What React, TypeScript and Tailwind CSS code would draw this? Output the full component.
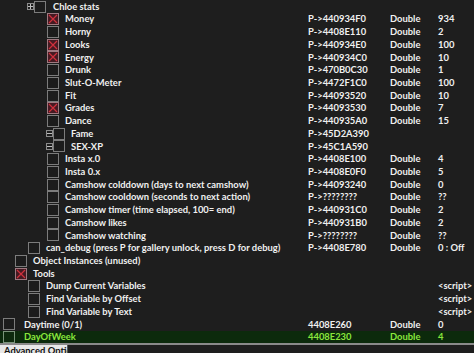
import React from "react";

type Row = {
  name: string;
  cb: number; // checkbox left x
  text: number; // text left x
  expand?: "+" | "-";
  ex?: number;
  checked?: boolean;
  addr?: string;
  type?: string;
  value?: string;
  green?: boolean;
};

const rows: Row[] = [
  { name: "Chloe stats", cb: 34, text: 53, expand: "+", ex: 27 },
  { name: "Money", cb: 47, text: 65, checked: true, addr: "P->440934F0", type: "Double", value: "934" },
  { name: "Horny", cb: 47, text: 65, addr: "P->4408E110", type: "Double", value: "2" },
  { name: "Looks", cb: 47, text: 65, checked: true, addr: "P->440934E0", type: "Double", value: "100" },
  { name: "Energy", cb: 47, text: 65, checked: true, addr: "P->440934C0", type: "Double", value: "10" },
  { name: "Drunk", cb: 47, text: 65, addr: "P->470B0C30", type: "Double", value: "1" },
  { name: "Slut-O-Meter", cb: 47, text: 65, addr: "P->4472F1C0", type: "Double", value: "100" },
  { name: "Fit", cb: 47, text: 65, addr: "P->44093520", type: "Double", value: "10" },
  { name: "Grades", cb: 47, text: 65, checked: true, addr: "P->44093530", type: "Double", value: "7" },
  { name: "Dance", cb: 47, text: 65, addr: "P->440935A0", type: "Double", value: "15" },
  { name: "Fame", cb: 53, text: 71, expand: "-", ex: 46, addr: "P->45D2A390" },
  { name: "SEX-XP", cb: 53, text: 71, expand: "-", ex: 46, addr: "P->45C1A590" },
  { name: "Insta x.0", cb: 47, text: 65, addr: "P->4408E100", type: "Double", value: "4" },
  { name: "Insta 0.x", cb: 47, text: 65, addr: "P->4408E0F0", type: "Double", value: "5" },
  { name: "Camshow colddown (days to next camshow)", cb: 47, text: 65, addr: "P->44093240", type: "Double", value: "0" },
  { name: "Camshow cooldown (seconds to next action)", cb: 47, text: 65, addr: "P->????????", type: "Double", value: "??" },
  { name: "Camshow timer (time elapsed, 100= end)", cb: 47, text: 65, addr: "P->440931C0", type: "Double", value: "2" },
  { name: "Camshow likes", cb: 47, text: 65, addr: "P->440931B0", type: "Double", value: "2" },
  { name: "Camshow watching", cb: 47, text: 65, addr: "P->????????", type: "Double", value: "??" },
  { name: "can_debug (press P for gallery unlock, press D for debug)", cb: 28, text: 46, addr: "P->4408E780", type: "Double", value: "0 : Off" },
  { name: "Object Instances (unused)", cb: 15, text: 33 },
  { name: "Tools", cb: 15, text: 33, checked: true },
  { name: "Dump Current Variables", cb: 28, text: 46, value: "<script>" },
  { name: "Find Variable by Offset", cb: 28, text: 46, value: "<script>" },
  { name: "Find Variable by Text", cb: 28, text: 46, value: "<script>" },
  { name: "Daytime (0/1)", cb: 3, text: 24, addr: "4408E260", type: "Double", value: "0" },
  { name: "DayOfWeek", cb: 3, text: 24, addr: "4408E230", type: "Double", value: "4", green: true },
];

function Checkbox({ checked, green }: { checked?: boolean; green?: boolean }) {
  if (checked) {
    return (
      <div className="w-[12px] h-[12px] border border-[#a07880] bg-[#451a22] flex items-center justify-center shrink-0">
        <svg width="10" height="10" viewBox="0 0 10 10">
          <path d="M1 1 L9 9 M9 1 L1 9" stroke="#d0303c" strokeWidth="1.2" />
        </svg>
      </div>
    );
  }
  return (
    <div
      className={
        "w-[12px] h-[12px] border shrink-0 " +
        (green ? "border-[#7a947a] bg-[#0e2a0e]" : "border-[#7c7c7c] bg-[#1c1c1c]")
      }
    />
  );
}

function Expander({ sign }: { sign: "+" | "-" }) {
  return (
    <div className="w-[7px] h-[7px] border border-[#8c8c8c] flex items-center justify-center shrink-0">
      <svg width="5" height="5" viewBox="0 0 5 5">
        <path d={sign === "+" ? "M0 2.5 H5 M2.5 0 V5" : "M0 2.5 H5"} stroke="#bdbdbd" strokeWidth="1" />
      </svg>
    </div>
  );
}

export default function App() {
  return (
    <div
      className="w-[474px] h-[353px] bg-[#1e1e1e] overflow-hidden flex flex-col text-[9.4px] leading-none text-[#f0f0f0]"
      style={{ fontFamily: 'Lato, "Noto Sans", sans-serif' }}
    >
      <div className="flex flex-col">
        {rows.map((r, i) => (
          <div
            key={i}
            className={"h-[12.72px] flex items-center shrink-0 " + (r.green ? "bg-[#0c2a0c] text-[#8ae63c]" : "")}
          >
            <div className="w-[308px] shrink-0 h-full flex items-center relative">
              {r.expand && (
                <div className="absolute top-[3px]" style={{ left: r.ex }}>
                  <Expander sign={r.expand} />
                </div>
              )}
              <div className="absolute top-[0.5px]" style={{ left: r.cb }}>
                <Checkbox checked={r.checked} green={r.green} />
              </div>
              <span className="absolute whitespace-nowrap font-bold" style={{ left: r.text }}>
                {r.name}
              </span>
            </div>
            <div className="w-[82px] shrink-0 whitespace-nowrap font-bold">{r.addr}</div>
            <div className="w-[48px] shrink-0 whitespace-nowrap font-bold">{r.type}</div>
            <div className="flex-1 whitespace-nowrap font-bold">{r.value}</div>
          </div>
        ))}
      </div>
      <div className="h-[2px] bg-[#8a8a8a] shrink-0" />
      <div className="flex-1 flex bg-[#1e1e1e]">
        <div className="w-[68px] bg-[#e8e8e8] text-[#111] pt-[1px] pl-[4px] font-bold whitespace-nowrap overflow-hidden border-r border-[#555]">
          Advanced Options
        </div>
      </div>
    </div>
  );
}
